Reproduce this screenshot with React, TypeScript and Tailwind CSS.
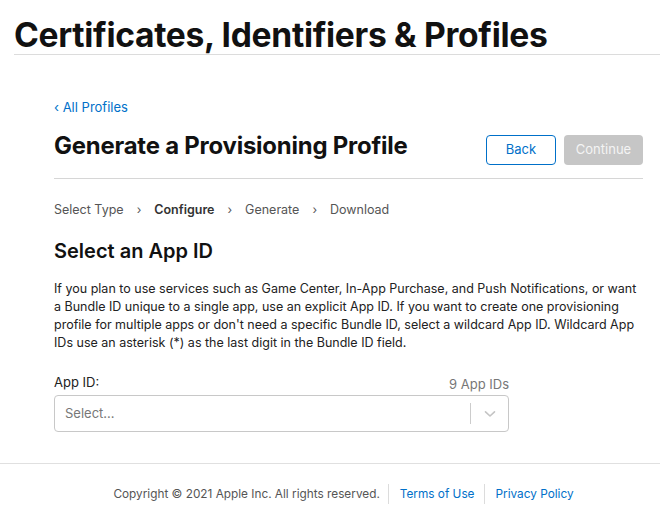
import React from "react";

export default function App() {
  const font = { fontFamily: 'Inter, "Noto Sans", sans-serif' };
  return (
    <div className="w-[660px] h-[526px] bg-white text-[#111] overflow-hidden" style={font}>
      <header className="pl-[14px] pt-[16px]">
        <h1 className="text-[33.6px] leading-[38px] font-bold tracking-[-0.3px] text-[#111] border-b border-[#dcdcdc]">
          Certificates, Identifiers &amp; Profiles
        </h1>
      </header>
      <main className="pl-[54px] pr-[17px] pt-[44px]">
        <a className="text-[13px] leading-[16px] text-[#0070c9] block">‹ All Profiles</a>
        <div className="flex items-start justify-between mt-[17px] pb-[13px] border-b border-[#d6d6d6]">
          <h2 className="text-[23.9px] leading-[28px] font-bold tracking-[-0.2px] text-[#111]">
            Generate a Provisioning Profile
          </h2>
          <div className="flex gap-[8px] mt-[3px]">
            <button className="w-[70px] h-[30px] rounded-[4px] border border-[#0070c9] text-[#0070c9] text-[13px] bg-white">
              Back
            </button>
            <button className="w-[79px] h-[30px] rounded-[4px] bg-[#c6c6c6] text-[#f4f4f4] text-[13px]">
              Continue
            </button>
          </div>
        </div>
        <div className="flex items-center gap-[13px] mt-[22px] text-[12.5px] leading-[18px] text-[#555]">
          <span>Select Type</span>
          <span className="text-[12px]">›</span>
          <span className="font-semibold text-[#333]">Configure</span>
          <span className="text-[12px]">›</span>
          <span>Generate</span>
          <span className="text-[12px]">›</span>
          <span>Download</span>
        </div>
        <h3 className="text-[20px] leading-[26px] font-semibold text-[#111] mt-[19px]">Select an App ID</h3>
        <p className="text-[12.5px] leading-[18px] text-[#222] mt-[16px] pr-[2px]">
          If you plan to use services such as Game Center, In-App Purchase, and Push Notifications, or want a Bundle ID unique to a single app, use an explicit App ID. If you want to create one provisioning profile for multiple apps or don't need a specific Bundle ID, select a wildcard App ID. Wildcard App IDs use an asterisk (*) as the last digit in the Bundle ID field.
        </p>
        <div className="w-[455px] mt-[22px]">
          <div className="flex items-end justify-between">
            <span className="text-[13px] leading-[16px] text-[#222]">App ID:</span>
            <span className="text-[13px] leading-[16px] text-[#777] translate-y-[2px]">9 App IDs</span>
          </div>
          <div className="mt-[5px] h-[37px] border border-[#c8c8c8] rounded-[4px] flex items-center">
            <span className="flex-1 pl-[10px] text-[13px] text-[#777]">Select...</span>
            <span className="w-px h-[21px] bg-[#cccccc]" />
            <span className="w-[37px] flex items-center justify-center">
              <svg width="12" height="8" viewBox="0 0 12 8" fill="none">
                <path d="M1.5 1.8 L6 6 L10.5 1.8" stroke="#c4c4c4" strokeWidth="1.6" strokeLinecap="round" strokeLinejoin="round" />
              </svg>
            </span>
          </div>
        </div>
      </main>
      <footer className="mt-[31px] border-t border-[#e0e0e0]">
        <div className="flex items-center justify-center pt-[20px] text-[11.8px] leading-[16px] pl-[27px]">
          <span className="text-[#555] pr-[8px]">Copyright © 2021 Apple Inc. All rights reserved.</span>
          <span className="w-px h-[20px] bg-[#dcdcdc]" />
          <a className="text-[#0070c9] pl-[11px] pr-[9px]">Terms of Use</a>
          <span className="w-px h-[20px] bg-[#dcdcdc]" />
          <a className="text-[#0070c9] pl-[11px]">Privacy Policy</a>
        </div>
      </footer>
    </div>
  );
}
